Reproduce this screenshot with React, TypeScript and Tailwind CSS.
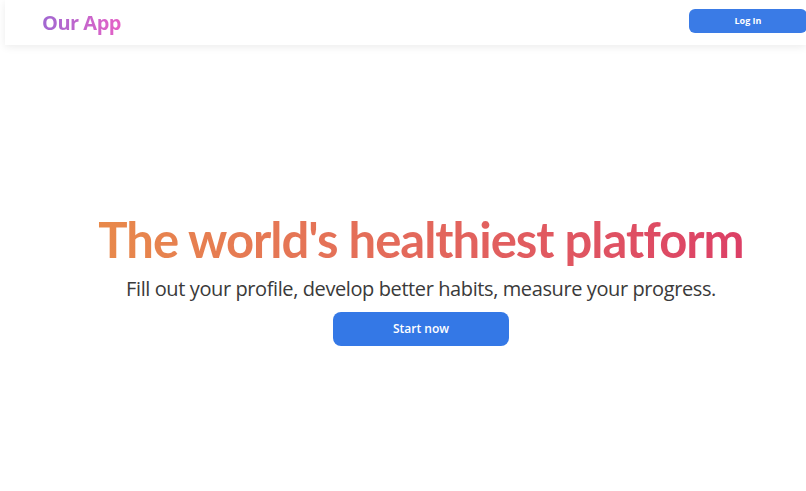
import React from 'react';

export default function App() {
  return (
    <div className="min-h-screen w-full overflow-hidden bg-white" style={{ fontFamily: '"Open Sans", "Noto Sans", sans-serif' }}>
      {/* Header */}
      <header className="ml-[5px] h-[45px] flex items-center justify-between bg-white shadow-[0_2px_8px_rgba(0,0,0,0.08)]">
        <span className="pl-[37px] text-[20px] font-bold tracking-[-0.5px] bg-gradient-to-r from-[#7f66d6] to-[#e560c6] bg-clip-text text-transparent">
          Our App
        </span>
        <button className="mt-[-3px] h-[24px] w-[118px] -mr-[1px] rounded-[6px] bg-[#3a7be6] text-[9px] font-bold text-white">
          Log In
        </button>
      </header>

      {/* Hero */}
      <main className="flex flex-col items-center pt-[161px] pl-[36px]">
        <h1
          className="text-[49px] font-bold leading-[66px] tracking-[-1px] bg-gradient-to-r from-[#e8894a] to-[#dc3f66] bg-clip-text text-transparent"
          style={{ fontFamily: 'Lato, "Open Sans", sans-serif' }}
        >
          The world's healthiest platform
        </h1>
        <p className="mt-[4px] text-[20px] leading-[26px] tracking-[-0.4px] text-[#3a3a3a]">
          Fill out your profile, develop better habits, measure your progress.
        </p>
        <button className="mt-[10px] h-[34px] w-[176px] rounded-[8px] bg-[#3478e6] text-[12px] font-semibold text-white">
          Start now
        </button>
      </main>
    </div>
  );
}
